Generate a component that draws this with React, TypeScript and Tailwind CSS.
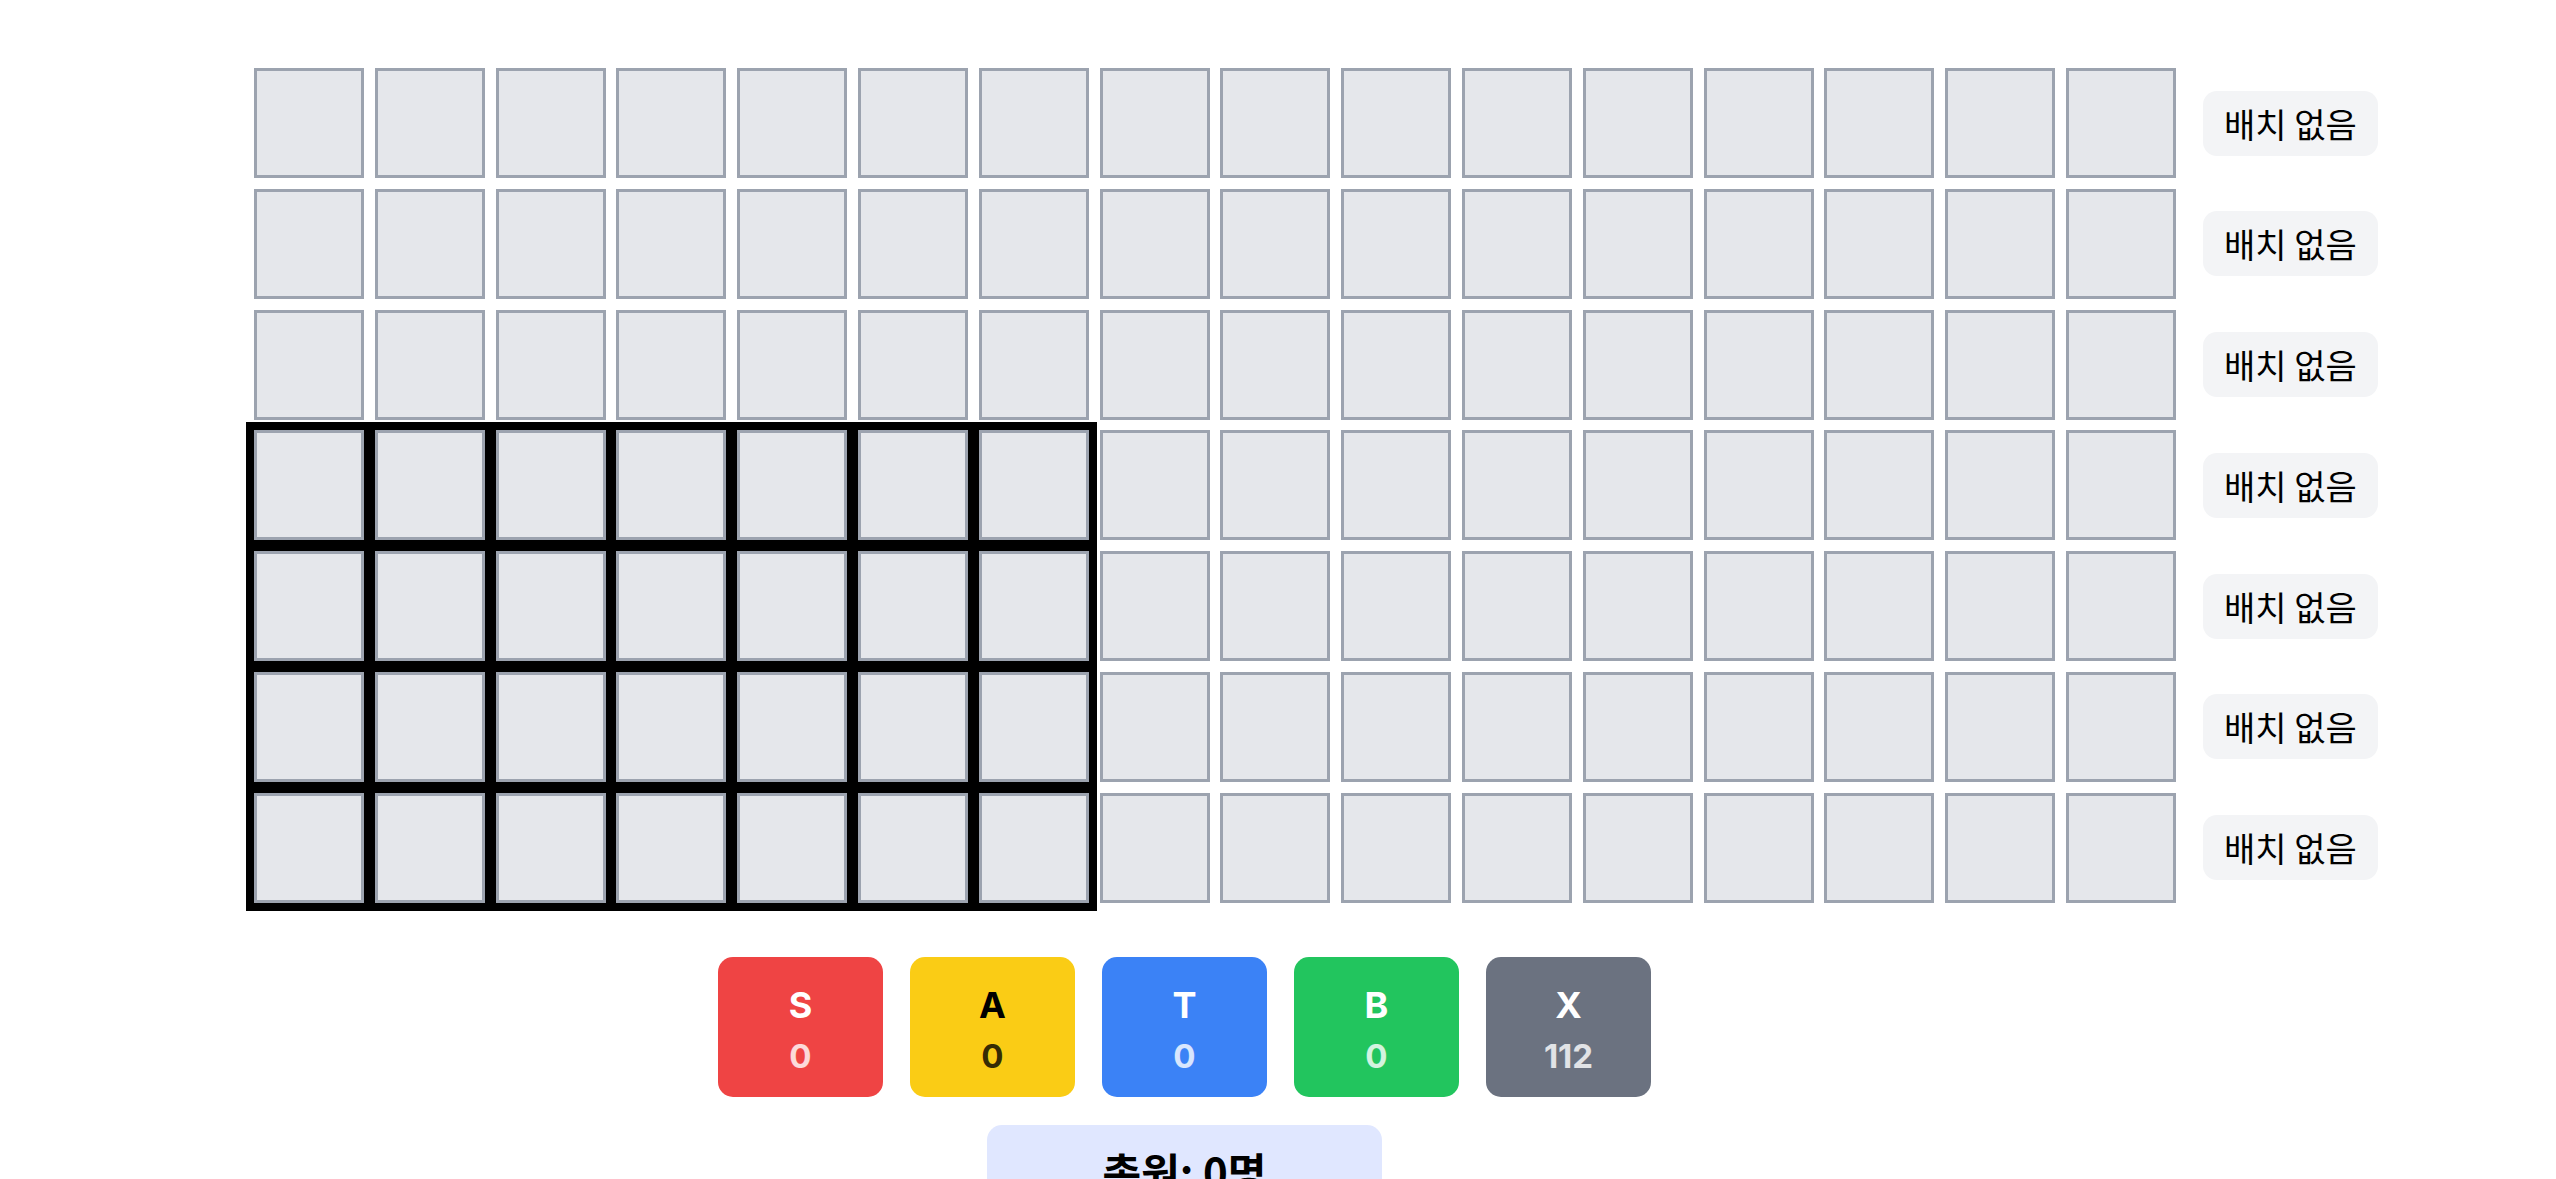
import React from "react";

const ROWS = 7;
const COLS = 16;

const grades = [
  { key: "S", count: 0, box: "bg-[#ef4444]", label: "text-white", num: "text-white/80" },
  { key: "A", count: 0, box: "bg-[#facc15]", label: "text-black", num: "text-black/80" },
  { key: "T", count: 0, box: "bg-[#3b82f6]", label: "text-white", num: "text-white/80" },
  { key: "B", count: 0, box: "bg-[#22c55e]", label: "text-white", num: "text-white/80" },
  { key: "X", count: 112, box: "bg-[#6b7280]", label: "text-white", num: "text-white/80" },
];

function Cell({ zone }: { zone: boolean }) {
  return (
    <div
      className={`w-[110px] h-[110px] shrink-0 bg-[#e5e7eb] border-[3px] border-[#9ca3af] ${
        zone ? "outline-8 outline-black" : ""
      }`}
    />
  );
}

export default function App() {
  return (
    <div className="min-h-screen bg-white font-['Inter','Noto_Sans_CJK_KR',sans-serif] text-black">
      {/* Seat grid */}
      <div className="pt-[68px] pl-[254px] flex flex-col gap-[10.8px]">
        {Array.from({ length: ROWS }).map((_, r) => (
          <div key={r} className="flex items-center">
            <div className="flex gap-[10.8px]">
              {Array.from({ length: COLS }).map((_, c) => (
                <Cell key={c} zone={r >= 3 && c < 7} />
              ))}
            </div>
            <div className="ml-[27px] h-[65px] px-[21px] flex items-center rounded-[14px] bg-[#f3f4f6] text-[34px] font-['Noto_Sans_CJK_KR',sans-serif]">
              배치 없음
            </div>
          </div>
        ))}
      </div>

      {/* Summary */}
      <div className="mt-[54px] ml-[718px] w-fit flex flex-col items-center">
        <div className="flex gap-[27px]">
          {grades.map((g) => (
            <div
              key={g.key}
              className={`w-[165px] h-[140px] pt-[6px] rounded-[15px] flex flex-col items-center justify-center ${g.box}`}
            >
              <span className={`text-[36px] leading-[52px] font-bold ${g.label}`}>{g.key}</span>
              <span className={`text-[33px] leading-[50px] font-bold ${g.num}`}>{g.count}</span>
            </div>
          ))}
        </div>
        <div className="mt-[28px] w-[395px] rounded-[15px] bg-[#e0e7ff] pt-[17px] pb-[16px] flex justify-center">
          <span className="text-[42px] leading-[58px] font-bold font-['Noto_Sans_CJK_KR',sans-serif]">총원: 0명</span>
        </div>
      </div>
    </div>
  );
}
